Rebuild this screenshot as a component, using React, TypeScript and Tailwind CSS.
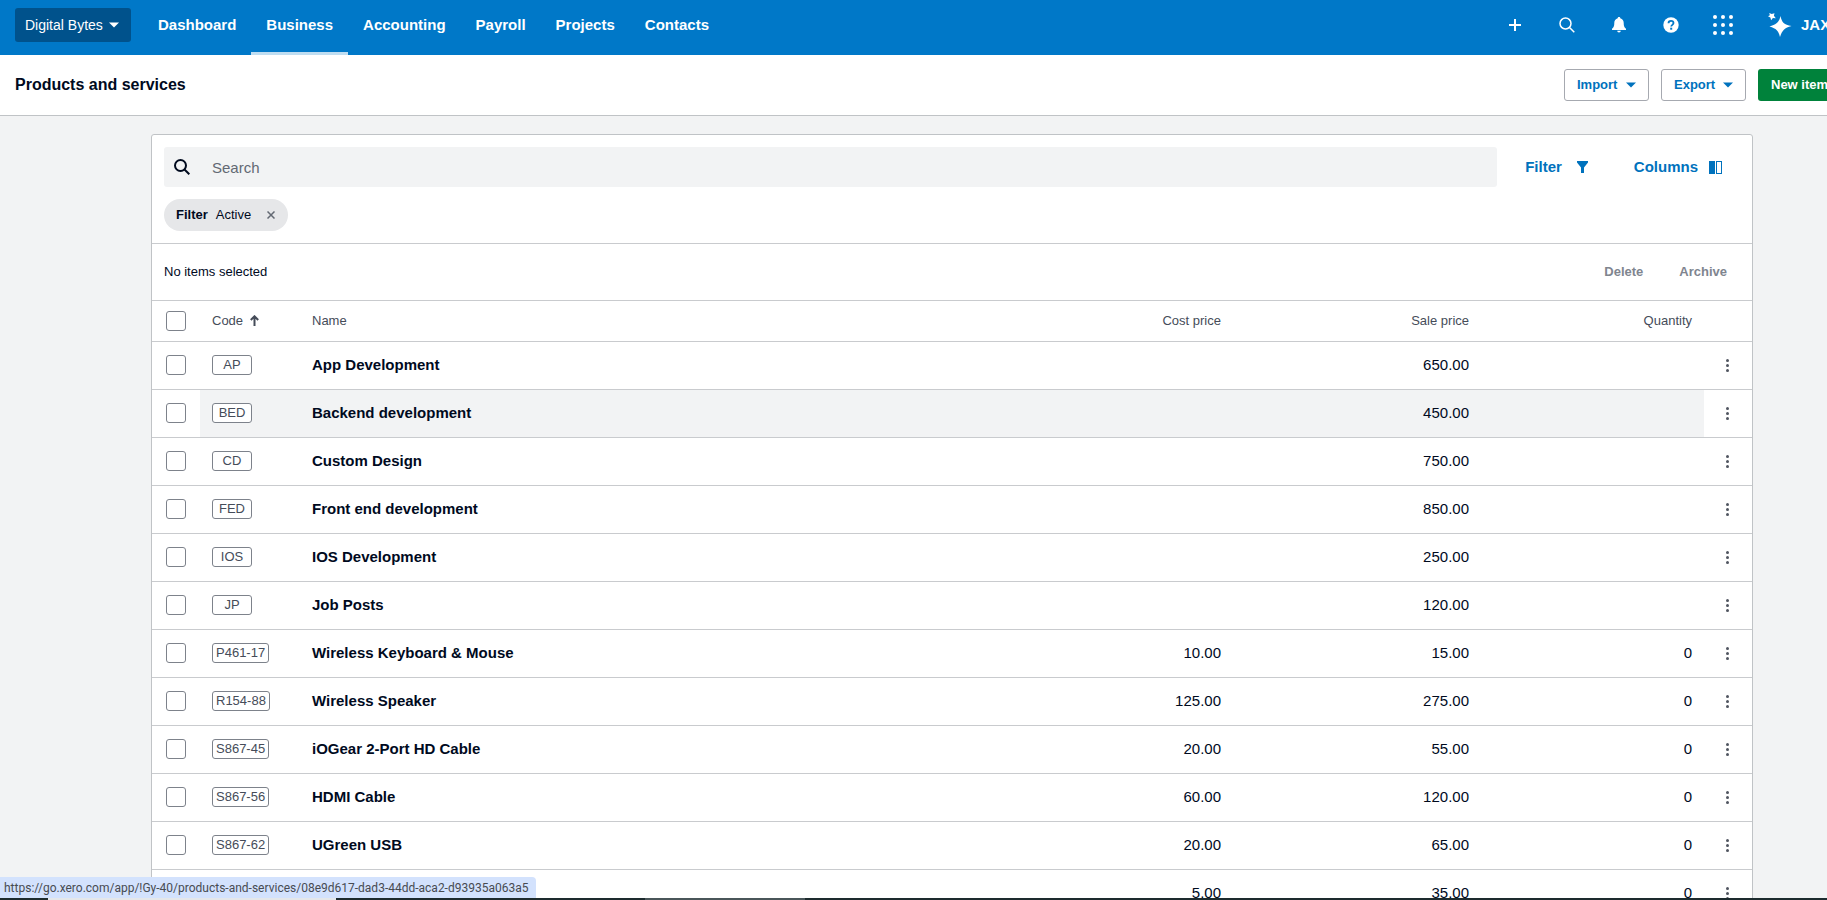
import React from 'react';

const navLinks = [
    { name: 'Dashboard', path: '#dashboard' },
    { name: 'Business', path: '#business', active: true },
    { name: 'Accounting', path: '#accounting' },
    { name: 'Payroll', path: '#payroll' },
    { name: 'Projects', path: '#projects' },
    { name: 'Contacts', path: '#contacts' }
];

const items = [
    { code: 'AP', name: 'App Development', cost: '', sale: '650.00', quantity: '' },
    { code: 'BED', name: 'Backend development', cost: '', sale: '450.00', quantity: '', highlighted: true },
    { code: 'CD', name: 'Custom Design', cost: '', sale: '750.00', quantity: '' },
    { code: 'FED', name: 'Front end development', cost: '', sale: '850.00', quantity: '' },
    { code: 'IOS', name: 'IOS Development', cost: '', sale: '250.00', quantity: '' },
    { code: 'JP', name: 'Job Posts', cost: '', sale: '120.00', quantity: '' },
    { code: 'P461-17', name: 'Wireless Keyboard & Mouse', cost: '10.00', sale: '15.00', quantity: '0' },
    { code: 'R154-88', name: 'Wireless Speaker', cost: '125.00', sale: '275.00', quantity: '0' },
    { code: 'S867-45', name: 'iOGear 2-Port HD Cable', cost: '20.00', sale: '55.00', quantity: '0' },
    { code: 'S867-56', name: 'HDMI Cable', cost: '60.00', sale: '120.00', quantity: '0' },
    { code: 'S867-62', name: 'UGreen USB', cost: '20.00', sale: '65.00', quantity: '0' },
    { code: '', name: '', cost: '5.00', sale: '35.00', quantity: '0' }
];

const Caret = () => (
    <svg width="10" height="6" viewBox="0 0 10 6" fill="currentColor" aria-hidden="true">
        <path d="M0 0.5h10L5 5.5z" />
    </svg>
);

const SearchIcon = ({ stroke }: { stroke: number }) => (
    <svg width="16" height="16" viewBox="0 0 16 16" fill="none" stroke="currentColor" strokeWidth={stroke} aria-hidden="true">
        <circle cx="6.5" cy="6.5" r="5.5" />
        <path d="M10.5 10.5l4.8 4.8" />
    </svg>
);

const headerActions = [
    {
        name: 'Create new',
        icon: (
            <svg width="12" height="12" viewBox="0 0 12 12" stroke="currentColor" strokeWidth="2">
                <path d="M6 0v12M0 6h12" />
            </svg>
        )
    },
    { name: 'Search organisation', icon: <SearchIcon stroke={1.5} /> },
    {
        name: 'Notifications',
        icon: (
            <svg width="14" height="16" viewBox="0 0 14 16" fill="currentColor">
                <path d="M7 0c.8 0 1.3.5 1.3 1.2 2.2.6 3.4 2.3 3.4 4.6 0 3.4.6 4.7 2.3 6v1.2H0v-1.200c1.700-1.300 2.300-2.600 2.300-6 0-2.300 1.200-4 3.400-4.600C5.700.5 6.200 0 7 0zM5.200 13.800h3.600a1.800 1.800 0 0 1-3.600 0z" />
            </svg>
        )
    },
    {
        name: 'Help',
        icon: (
            <svg width="16" height="16" viewBox="0 0 16 16">
                <circle cx="8" cy="8" r="7.7" fill="currentColor" />
                <path d="M5.5 6.3c0-1.5 1.100-2.400 2.500-2.400s2.500.9 2.500 2.200c0 1.700-2.300 1.800-2.300 3.500" fill="none" stroke="#0078c8" strokeWidth="1.8" />
                <rect x="7.2" y="10.7" width="2" height="2" fill="#0078c8" />
            </svg>
        )
    },
    {
        name: 'Apps',
        icon: (
            <svg width="20" height="20" viewBox="0 0 20 20" fill="currentColor">
                {[2, 10, 18].map((cy) => [2, 10, 18].map((cx) => <circle key={`${cx}-${cy}`} cx={cx} cy={cy} r="2" />))}
            </svg>
        )
    }
];

const TopBar = () => (
    <header className="flex h-[55px] items-start bg-[#0078c8] pl-[15px] text-[15px] text-white">
        <button className="mt-2 flex h-[34px] w-[116px] items-center gap-[6px] rounded-[3px] bg-[#00528c] pl-[10px] text-sm">
            Digital Bytes
            <Caret />
        </button>
        <nav className="ml-3 flex">
            {navLinks.map((link) => (
                <a
                    key={link.name}
                    href={link.path}
                    className={`flex h-[55px] items-center border-b-3 px-[15px] pb-[2px] font-bold ${link.active ? 'border-[#bfddf1]' : 'border-transparent'}`}
                >
                    {link.name}
                </a>
            ))}
        </nav>
        <div className="ml-auto flex h-[50px] items-center">
            {headerActions.map((action) => (
                <button key={action.name} aria-label={action.name} className="flex h-10 w-[52px] items-center justify-center">
                    {action.icon}
                </button>
            ))}
            <button className="flex h-10 w-[155px] items-center gap-[9px] pl-[19px] font-bold">
                <svg width="24" height="24" viewBox="0 0 24 24" fill="currentColor" aria-hidden="true">
                    <path d="M12.500 3c1.300 6.500 3.500 8.500 11 10-7 1.800-9.500 4.500-11.500 11-1.500-6-3.500-8.500-10.500-10.500C8.500 11.500 11 9.500 12.500 3z" />
                    <path d="M1.200 0l2.500 1L6.500.2l-.6 2.600 1.900 2.400-2.900-.2-1.800 2.200-.7-2.800L0 3.300l1.900-1z" />
                </svg>
                JAX
            </button>
        </div>
    </header>
);

const PageHeader = () => (
    <div className="flex h-[61px] items-center border-b border-[#c0c3c6] bg-white pr-4 pl-[15px]">
        <h1 className="text-base font-bold">Products and services</h1>
        <div className="ml-auto flex gap-3 text-[13px] font-bold">
            {['Import', 'Export'].map((label) => (
                <button key={label} className="flex h-8 w-[85px] items-center justify-between rounded-[3px] border border-[#a6a9b0] px-3 text-[#0072bd]">
                    {label}
                    <Caret />
                </button>
            ))}
            <button className="flex h-8 w-[130px] items-center justify-between rounded-[3px] bg-[#00823b] px-[13px] text-white">
                New item
                <Caret />
            </button>
        </div>
    </div>
);

const Toolbar = () => (
    <div className="border-b border-[#c9cbce] p-3">
        <div className="flex items-center">
            <label className="flex h-10 flex-1 items-center gap-[22px] rounded-[3px] bg-[#f2f3f4] pl-[10px]">
                <SearchIcon stroke={2} />
                <input
                    type="text"
                    aria-label="Search"
                    placeholder="Search"
                    className="h-full flex-1 bg-transparent text-[15px] outline-none placeholder:text-[#636973]"
                />
            </label>
            <button className="ml-7 flex items-center gap-[15px] text-[15px] font-bold text-[#0072bd]">
                Filter
                <svg width="11" height="12" viewBox="0 0 11 12" fill="currentColor" aria-hidden="true">
                    <path d="M0 0h11v1.500L7 6.500V12H4V6.500L0 1.500z" />
                </svg>
            </button>
            <button className="mr-[18px] ml-[46px] flex items-center gap-[11px] text-[15px] font-bold text-[#0072bd]">
                Columns
                <svg width="13" height="13" viewBox="0 0 13 13" aria-hidden="true">
                    <rect width="6" height="13" fill="currentColor" />
                    <rect x="7.5" y="0.5" width="5" height="12" fill="none" stroke="currentColor" />
                </svg>
            </button>
        </div>
        <div className="mt-3 flex h-8 w-[124px] items-center rounded-full bg-[#e6e7e9] pl-3 text-[13px]">
            <span className="mr-2 font-bold">Filter</span>
            <span>Active</span>
            <button aria-label="Remove filter" className="ml-4 text-[#636973]">
                <svg width="8" height="8" viewBox="0 0 8 8" stroke="currentColor" strokeWidth="1.5">
                    <path d="M0.5 0.5l7 7M7.5 0.5l-7 7" />
                </svg>
            </button>
        </div>
    </div>
);

const Checkbox = ({ label }: { label: string }) => (
    <input
        type="checkbox"
        aria-label={label}
        className="mx-auto block size-5 appearance-none rounded-[3px] border border-[#7d828b] bg-white checked:bg-[#0078c8]"
    />
);

const ItemsTable = () => (
    <table className="w-full table-fixed">
        <colgroup>
            <col className="w-12" />
            <col className="w-[100px]" />
            <col />
            <col className="w-[248px]" />
            <col className="w-[248px]" />
            <col className="w-[223px]" />
            <col className="w-12" />
        </colgroup>
        <thead>
            <tr className="h-10 border-b border-[#c9cbce] text-left text-[13px] text-[#454c59]">
                <th>
                    <Checkbox label="Select all items" />
                </th>
                <th className="px-3 font-normal">
                    <button className="flex items-center gap-[7px]">
                        Code
                        <svg width="9" height="11" viewBox="0 0 9 11" fill="none" stroke="currentColor" strokeWidth="2" aria-hidden="true">
                            <path d="M4.5 11V1.500M0.800 5L4.500 1.300 8.200 5" />
                        </svg>
                    </button>
                </th>
                <th className="px-3 font-normal">Name</th>
                <th className="px-3 text-right font-normal">Cost price</th>
                <th className="px-3 text-right font-normal">Sale price</th>
                <th className="px-3 text-right font-normal">Quantity</th>
                <th></th>
            </tr>
        </thead>
        <tbody>
            {items.map((item) => {
                const cell = item.highlighted ? 'px-3 bg-[#f2f3f4]' : 'px-3';
                return (
                    <tr key={item.code} className="h-12 border-b border-[#c9cbce] text-[15px]">
                        <td>
                            <Checkbox label={`Select ${item.name}`} />
                        </td>
                        <td className={cell}>
                            {item.code && (
                                <span className="flex h-5 w-fit min-w-10 items-center justify-center rounded-[3px] border border-[#7d828b] bg-white px-[3px] text-[13px] text-[#454c59]">
                                    {item.code}
                                </span>
                            )}
                        </td>
                        <td className={`${cell} font-bold`}>{item.name}</td>
                        <td className={`${cell} text-right`}>{item.cost}</td>
                        <td className={`${cell} text-right`}>{item.sale}</td>
                        <td className={`${cell} text-right`}>{item.quantity}</td>
                        <td>
                            <button aria-label="More options" className="mx-auto flex h-8 w-8 items-center justify-center text-[#505560]">
                                <svg width="4" height="13" viewBox="0 0 4 13" fill="currentColor">
                                    <circle cx="1.5" cy="1.5" r="1.5" />
                                    <circle cx="1.5" cy="6.5" r="1.5" />
                                    <circle cx="1.5" cy="11.5" r="1.5" />
                                </svg>
                            </button>
                        </td>
                    </tr>
                );
            })}
        </tbody>
    </table>
);

const StatusBar = () => (
    <div className="absolute inset-x-0 bottom-0">
        <div className="flex h-[21px] w-fit items-center rounded-tr-[4px] bg-[#d3e2fd] pr-2 pl-1 font-['Roboto',sans-serif] text-xs text-[#474b52]">
            https://go.xero.com/app/!Gy-40/products-and-services/08e9d617-dad3-44dd-aca2-d93935a063a5
        </div>
        <div className="flex h-[2px] bg-[#1d2b2e]">
            <div className="ml-12 w-[288px] bg-[#e4e7ea]"></div>
            <div className="ml-[309px] w-40 bg-[#4a5659]"></div>
        </div>
    </div>
);

export default function App() {
    return (
        <div className="relative h-screen overflow-hidden bg-[#f2f3f4] font-['Liberation_Sans',Arial,sans-serif] text-[#000a1e]">
            <div className="min-w-[1904px]">
                <TopBar />
                <PageHeader />
                <main className="mx-auto mt-[18px] max-w-[1602px] rounded-[3px] border border-[#c0c3c6] bg-white">
                    <Toolbar />
                    <div className="flex h-[57px] items-center border-b border-[#c9cbce] px-3 text-[13px]">
                        <span>No items selected</span>
                        <button disabled className="mr-9 ml-auto font-bold text-[#80858f]">Delete</button>
                        <button disabled className="mr-[13px] font-bold text-[#80858f]">Archive</button>
                    </div>
                    <ItemsTable />
                </main>
            </div>
            <StatusBar />
        </div>
    );
}
